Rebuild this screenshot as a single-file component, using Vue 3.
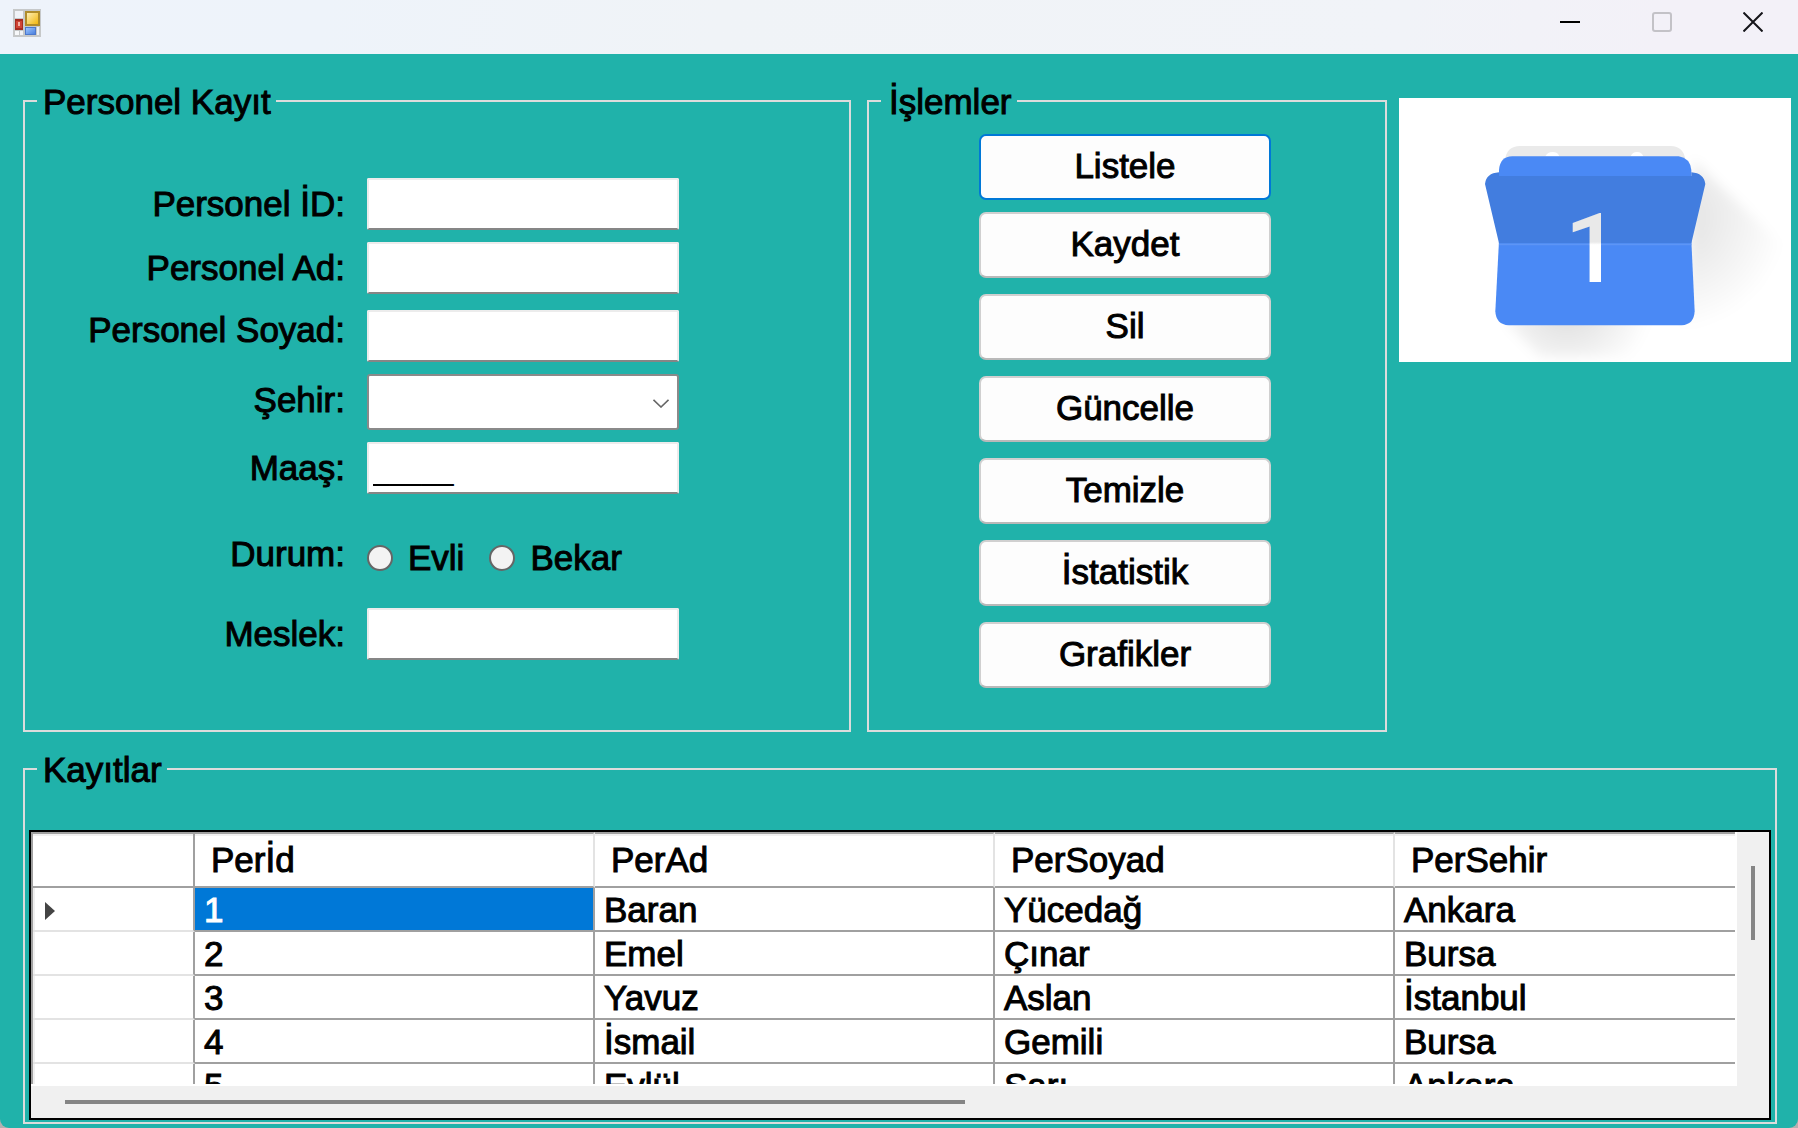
<script setup>
import { ref } from 'vue'

const actions = ['Listele', 'Kaydet', 'Sil', 'Güncelle', 'Temizle', 'İstatistik', 'Grafikler']
const columns = ['PerId', 'PerAd', 'PerSoyad', 'PerSehir']
const headings = { PerId: 'Perİd' }
const records = [
  { PerId: 1, PerAd: 'Baran', PerSoyad: 'Yücedağ', PerSehir: 'Ankara' },
  { PerId: 2, PerAd: 'Emel', PerSoyad: 'Çınar', PerSehir: 'Bursa' },
  { PerId: 3, PerAd: 'Yavuz', PerSoyad: 'Aslan', PerSehir: 'İstanbul' },
  { PerId: 4, PerAd: 'İsmail', PerSoyad: 'Gemili', PerSehir: 'Bursa' },
  { PerId: 5, PerAd: 'Eylül', PerSoyad: 'Sarı', PerSehir: 'Ankara' }
]
const salary = ref('_____')
const status = ref('')
</script>

<template>
  <div class="window">
    <header class="titlebar">
      <svg class="app-icon" viewBox="0 0 28 28" aria-hidden="true">
        <defs>
          <linearGradient id="gold" x1="0" y1="0" x2="1" y2="1">
            <stop offset="0" stop-color="#fdeeb4" /><stop offset="1" stop-color="#f2b70c" />
          </linearGradient>
          <linearGradient id="azure" x1="0" y1="0" x2="1" y2="1">
            <stop offset="0" stop-color="#9cc4ff" /><stop offset="1" stop-color="#4a80de" />
          </linearGradient>
        </defs>
        <rect width="28" height="28" fill="#c6c8c9" />
        <rect x="2" y="2" width="8" height="7" fill="#f1f3f8" />
        <rect x="2" y="22" width="4" height="4" fill="#f7f8fa" />
        <rect x="7" y="22" width="3" height="4" fill="#f1f3f6" />
        <rect x="24" y="18" width="2" height="8" fill="#eef0f4" />
        <rect x="2" y="10" width="8" height="11" fill="#a52a20" />
        <rect x="3" y="12" width="6" height="7" fill="#cf4335" />
        <rect x="5" y="13" width="2" height="4" fill="#f3b0a4" />
        <rect x="12" y="2" width="15" height="15" fill="#b08c2a" />
        <rect x="14" y="4" width="11" height="11" fill="url(#gold)" />
        <rect x="12" y="18" width="11" height="8" fill="#4c78cc" />
        <rect x="13" y="19" width="9" height="6" fill="url(#azure)" />
      </svg>
      <div class="caption">
        <button type="button" aria-label="Simge durumuna küçült">
          <svg viewBox="0 0 20 20"><path d="M0 10H20" stroke="#000" stroke-width="2" /></svg>
        </button>
        <button type="button" aria-label="Ekranı kapla" disabled>
          <svg viewBox="0 0 20 20"><rect x="1" y="1" width="18" height="18" rx="2" fill="none" stroke="#c3c2c7" stroke-width="2" /></svg>
        </button>
        <button type="button" class="close" aria-label="Kapat">
          <svg viewBox="0 0 20 20"><path d="M.5 .5L19.500 19.500M19.500 .5L.5 19.500" stroke="#15151a" stroke-width="2" /></svg>
        </button>
      </div>
    </header>

    <main>
      <div class="top">
        <fieldset class="group entry">
          <legend>Personel Kayıt</legend>
          <div class="form">
            <div class="row">
              <label for="pid">Personel İD:</label>
              <input id="pid" class="box" type="text" />
            </div>
            <div class="row">
              <label for="pad">Personel Ad:</label>
              <input id="pad" class="box" type="text" />
            </div>
            <div class="row surname">
              <label for="psoyad">Personel Soyad:</label>
              <input id="psoyad" class="box" type="text" />
            </div>
            <div class="row">
              <label for="sehir">Şehir:</label>
              <div class="combo">
                <select id="sehir"><option value=""></option></select>
                <svg viewBox="0 0 16 9" aria-hidden="true"><path d="M.5 .8L8 8L15.500 .8" fill="none" stroke="#666" stroke-width="1.600" /></svg>
              </div>
            </div>
            <div class="row">
              <label for="maas">Maaş:</label>
              <input id="maas" v-model="salary" class="box masked" type="text" />
            </div>
            <div class="row status" role="radiogroup" aria-labelledby="durum">
              <span id="durum" class="label">Durum:</span>
              <div class="options">
                <label class="option"><input v-model="status" type="radio" name="durum" value="evli" />Evli</label>
                <label class="option"><input v-model="status" type="radio" name="durum" value="bekar" />Bekar</label>
              </div>
            </div>
            <div class="row">
              <label for="meslek">Meslek:</label>
              <input id="meslek" class="box" type="text" />
            </div>
          </div>
        </fieldset>

        <fieldset class="group actions">
          <legend>İşlemler</legend>
          <div class="buttons">
            <button v-for="(name, i) in actions" :key="name" type="button" :class="{ primary: i === 0 }">{{ name }}</button>
          </div>
        </fieldset>

        <svg class="picture" viewBox="57 294 1176 792" role="img" aria-label="Takvim">
          <defs>
            <radialGradient id="side" gradientUnits="userSpaceOnUse" cx="880" cy="650" r="340">
              <stop offset="0.200" stop-color="#000" stop-opacity=".1" /><stop offset="1" stop-color="#000" stop-opacity="0" />
            </radialGradient>
            <radialGradient id="under" gradientUnits="userSpaceOnUse" cx="560" cy="900" r="260">
              <stop offset="0.200" stop-color="#000" stop-opacity=".12" /><stop offset="1" stop-color="#000" stop-opacity="0" />
            </radialGradient>
            <linearGradient id="digit" gradientUnits="userSpaceOnUse" x1="0" y1="726" x2="0" y2="734">
              <stop offset="0" stop-color="#e9e9e9" /><stop offset="1" stop-color="#fff" />
            </linearGradient>
            <filter id="soft" x="-20%" y="-20%" width="140%" height="140%"><feGaussianBlur stdDeviation="18" /></filter>
          </defs>
          <rect x="57" y="294" width="1176" height="792" fill="#fff" />
          <path d="M940 480L1233 760V880L1010 1086H860L920 900Z" fill="url(#side)" filter="url(#soft)" />
          <path d="M370 960L480 1070H840L1000 900L900 880Z" fill="url(#under)" filter="url(#soft)" />
          <path d="M375 480Q380 438 420 438H872Q912 440 916 480Z" fill="#eaeaea" />
          <path d="M496 469Q502 456 518 456T538 469ZM752 469Q757 456 771 456T790 469Z" fill="#fff" />
          <path d="M357 540V510Q360 470 397 469H896Q930 474 934 510V540Z" fill="#4a89f5" />
          <path d="M357 722H934L944 934Q942 974 905 976H386Q348 974 346 934Z" fill="#4a89f5" />
          <path d="M357 517V528H934V517Q972 520 976 552L934 730H357L315 552Q318 520 357 517Z" fill="#427ddf" />
          <path d="M357 733H934" stroke="#5d95f6" stroke-width="5" />
          <text x="637" y="846" class="day" text-anchor="middle" fill="url(#digit)">1</text>
        </svg>
      </div>

      <fieldset class="group records">
        <legend>Kayıtlar</legend>
        <div class="grid">
          <div class="viewport">
            <div class="clip">
              <table>
                <colgroup>
                  <col class="handle-col" />
                  <col v-for="c in columns" :key="c" class="data-col" />
                </colgroup>
                <thead>
                  <tr>
                    <th class="corner"></th>
                    <th v-for="c in columns" :key="c" scope="col">{{ headings[c] || c }}</th>
                  </tr>
                </thead>
                <tbody>
                  <tr v-for="(r, i) in records" :key="r.PerId">
                    <th class="handle" scope="row">
                      <svg v-if="i === 0" viewBox="0 0 10 18" aria-hidden="true"><path d="M0 0L10 9L0 18Z" fill="#444" /></svg>
                    </th>
                    <td v-for="(c, j) in columns" :key="c" :class="{ selected: i === 0 && j === 0 }">{{ r[c] }}</td>
                  </tr>
                </tbody>
              </table>
            </div>
          </div>
          <div class="vbar"><div class="thumb"></div></div>
          <div class="hbar"><div class="thumb"></div></div>
        </div>
      </fieldset>
    </main>
  </div>
</template>

<style>
body {
  margin: 0;
  background: #b4b0b0;
}
</style>

<style scoped>
* {
  box-sizing: border-box;
}

.window {
  min-height: 100vh;
  overflow: hidden;
  border-radius: 0 0 9px 9px;
  background: #20b2aa;
  color: #000;
  font-family: "Liberation Sans", Arial, sans-serif;
  font-size: 35px;
  line-height: 40px;
  -webkit-text-stroke: 1px currentColor;
}

button,
input,
select {
  font: inherit;
  color: inherit;
}

.titlebar {
  display: flex;
  align-items: center;
  justify-content: space-between;
  height: 54px;
  background: linear-gradient(100deg, #eef3fb 0%, #eef3fa 18%, #f0f3f7 40%, #f1f3f8 78%, #f3f1f8 92%);
}

.app-icon {
  width: 28px;
  height: 28px;
  margin: 0 0 8px 13px;
}

.caption {
  display: flex;
  align-self: stretch;
}

.caption button {
  display: flex;
  justify-content: center;
  width: 92px;
  padding: 12px 0 0;
  border: 0;
  background: none;
}

.caption .close {
  width: 90px;
}

.caption svg {
  width: 20px;
  height: 20px;
}

main {
  padding: 26px 7px 4px 23px;
}

.top {
  display: grid;
  grid-template-columns: 828fr 536fr 404fr;
}

.group {
  min-width: 0;
  margin: 0;
  padding: 0 4px;
  border: 2px solid #dcdcdc;
}

legend {
  margin-left: 12px;
  padding: 2px 5px 0 6px;
}

.entry {
  padding: 56px 0 70px;
}

.actions {
  margin-left: 16px;
  padding: 12px 4px 0 0;
}

.actions legend {
  padding-left: 8px;
}

.picture {
  display: block;
  min-width: 0;
  align-self: start;
  margin: 18px 0 0 12px;
}

.day {
  font-family: Roboto, sans-serif;
  font-size: 290px;
  font-weight: 500;
  -webkit-text-stroke: 0;
}

.form {
  display: flex;
  flex-direction: column;
  gap: 12px;
}

.row {
  display: grid;
  grid-template-columns: 320px 312px;
  column-gap: 22px;
  align-items: start;
}

.row > label,
.row > .label {
  padding-top: 6px;
  text-align: right;
}

.surname {
  min-height: 58px;
  margin-top: -2px;
}

.surname .box {
  align-self: end;
}

.box {
  width: 100%;
  height: 52px;
  padding: 0 4px;
  border: 2px solid #ececec;
  border-bottom-color: #868686;
  border-radius: 2px;
  outline: 0;
  background: #fff;
}

.masked {
  padding-top: 4px;
  font-size: 29px;
  -webkit-text-stroke: 0;
}

.combo {
  position: relative;
}

.combo select {
  display: block;
  width: 100%;
  height: 56px;
  border: 2px solid #8a8a8a;
  border-radius: 3px;
  appearance: none;
  background: #fff;
}

.combo svg {
  position: absolute;
  top: 25px;
  right: 10px;
  width: 16px;
  height: 9px;
  pointer-events: none;
}

.status {
  min-height: 68px;
  margin-top: 22px;
}

.options {
  display: flex;
  gap: 25px;
  padding-top: 10px;
}

.option {
  display: flex;
  align-items: center;
  gap: 15px;
}

.option input {
  width: 26px;
  height: 26px;
  margin: 0;
  border: 2px solid #666;
  border-radius: 50%;
  appearance: none;
  background: #f3f3f3;
}

.option input:checked {
  border: 8px solid #0067c0;
}

.buttons {
  display: flex;
  flex-direction: column;
  align-items: center;
  gap: 16px;
}

.buttons button {
  width: 292px;
  height: 66px;
  padding: 0 0 2px;
  border: 2px solid #d0d0d0;
  border-bottom-color: #b9b9b9;
  border-radius: 7px;
  background: #fdfdfd;
}

.buttons .primary {
  margin-bottom: -4px;
  border-color: #0078d7;
}

.records {
  margin: 16px 14px 0 0;
  padding: 40px 4px 2px;
}

.records legend {
  margin-left: 8px;
}

.grid {
  display: grid;
  grid-template-columns: minmax(0, 1fr) 32px;
  grid-template-rows: 254px 32px;
  border: 2px solid #000;
  background: #f0f0f0;
}

.viewport {
  padding: 0 2px 2px 0;
  background: #fff;
}

.clip {
  height: 252px;
  overflow: hidden;
}

table {
  width: 1764px;
  border-left: 2px solid #a0a0a0;
  border-spacing: 0;
  table-layout: fixed;
}

.handle-col {
  width: 162px;
}

.data-col {
  width: 400px;
}

th,
td {
  font-weight: 400;
  text-align: left;
  white-space: nowrap;
}

thead th {
  height: 56px;
  padding: 0 16px;
  border-top: 2px solid #a0a0a0;
  border-right: 2px solid #e3e3e3;
  border-bottom: 2px solid #a0a0a0;
  box-shadow: inset 0 2px #f0f0f0;
}

thead .corner {
  border-right-color: #a0a0a0;
}

td {
  height: 44px;
  padding: 2px 9px 0;
  border-right: 2px solid #a0a0a0;
  border-bottom: 2px solid #a0a0a0;
}

.handle {
  padding: 4px 0 0 12px;
  border-right: 2px solid #a0a0a0;
  border-bottom: 2px solid #e3e3e3;
  box-shadow: inset 2px 0 #f0f0f0;
}

.handle svg {
  display: block;
  width: 10px;
  height: 18px;
}

.selected {
  background: #0078d7;
  color: #fff;
}

.vbar {
  padding: 34px 14px 0;
}

.vbar .thumb {
  width: 4px;
  height: 74px;
  background: #858585;
}

.hbar {
  padding: 14px 0 0 34px;
}

.hbar .thumb {
  width: 900px;
  height: 4px;
  background: #858585;
}
</style>
